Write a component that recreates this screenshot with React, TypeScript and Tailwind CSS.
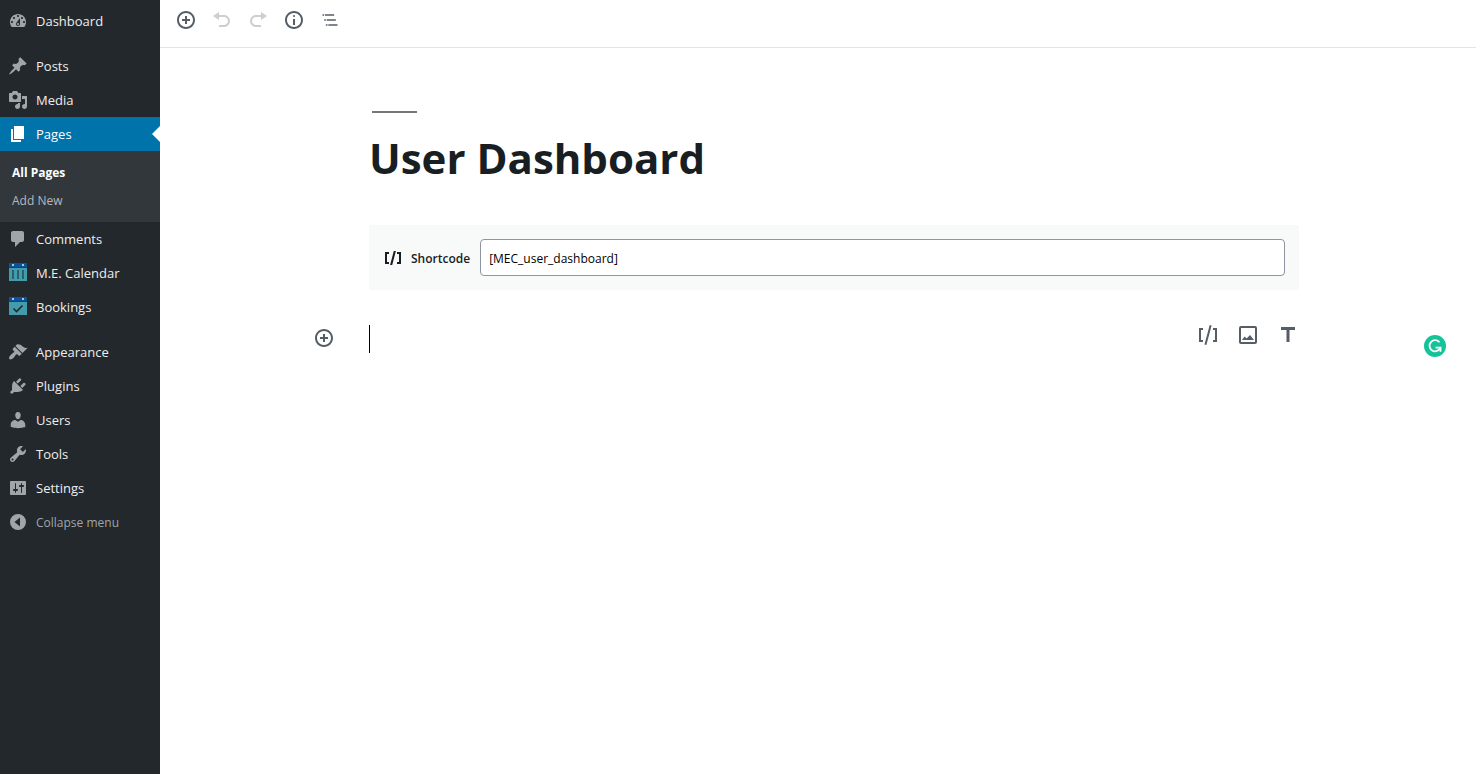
import { useState, type ReactNode } from "react";
import clsx from "clsx";

type MenuItem = {
    label: string;
    icon: ReactNode;
    gap?: boolean;
    children?: string[];
};

function Dashicon({ d, className = "size-5" }: { d: string; className?: string }) {
    return (
        <svg viewBox="0 0 20 20" className={className} fill="currentColor" aria-hidden="true">
            <path d={d} />
        </svg>
    );
}

function CalendarIcon({ check = false }: { check?: boolean }) {
    return (
        <svg viewBox="-1 0 20 20" className="size-5" aria-hidden="true">
            <path d="M0 0h18v4H0z" fill="#0a549b" />
            <path d="M0 4h18v1H0z" fill="#23404f" />
            <path d="M0 5h18v13H0z" fill="#429cab" />
            <path d="M3 1h2v2H3zM13 1h2v2h-2z" fill="#a9c3d8" />
            {check ? (
                <path d="M4.5 11.5l3 3 6-6" fill="none" stroke="#23282d" strokeWidth="1.6" />
            ) : (
                <path d="M3 7h2v9H3zM8 7h2v9H8zM13 7h2v9h-2z" fill="#28606e" />
            )}
        </svg>
    );
}

const icons = {
    dashboard: "M3.76 16h12.48c1.1-1.37 1.76-3.11 1.76-5 0-4.42-3.58-8-8-8s-8 3.58-8 8c0 1.89.66 3.63 1.76 5zM10 4c.55 0 1 .45 1 1s-.45 1-1 1-1-.45-1-1 .45-1 1-1zM6 6c.55 0 1 .45 1 1s-.45 1-1 1-1-.45-1-1 .45-1 1-1zm8 0c.55 0 1 .45 1 1s-.45 1-1 1-1-.45-1-1 .45-1 1-1zm-5.37 5.55L12 7v6c0 1.1-.9 2-2 2s-2-.9-2-2c0-.57.24-1.08.63-1.45zM4 10c.55 0 1 .45 1 1s-.45 1-1 1-1-.45-1-1 .45-1 1-1zm12 0c.55 0 1 .45 1 1s-.45 1-1 1-1-.45-1-1 .45-1 1-1zm-5 3c0-.55-.45-1-1-1s-1 .45-1 1 .45 1 1 1 1-.45 1-1z",
    post: "M10.44 3.02l1.82-1.82 6.36 6.35-1.83 1.82c-1.05-.68-2.48-.57-3.41.36l-.75.75c-.92.93-1.04 2.35-.35 3.41l-1.83 1.82-2.41-2.41-2.8 2.79c-.42.42-3.38 2.71-3.8 2.29s1.86-3.39 2.28-3.81l2.79-2.79L4.1 9.36l1.83-1.82c1.05.69 2.48.57 3.4-.36l.75-.75c.93-.92 1.05-2.35.36-3.41z",
    media: "M13 11V4c0-.55-.45-1-1-1h-1.67L9 1H5L3.67 3H2c-.55 0-1 .45-1 1v7c0 .55.45 1 1 1h10c.55 0 1-.45 1-1zM7 4.5c1.38 0 2.5 1.12 2.5 2.5S8.38 9.5 7 9.5 4.5 8.38 4.5 7 5.62 4.5 7 4.5zM14 6h5v10.5c0 1.38-1.12 2.5-2.5 2.5S14 17.88 14 16.5s1.12-2.5 2.5-2.5c.17 0 .34.02.5.05V9h-3V6zm-4 8.05V13h2v3.5c0 1.38-1.12 2.5-2.5 2.5S7 17.88 7 16.5 8.12 14 9.5 14c.17 0 .34.02.5.05z",
    page: "M6 15V2h10v13H6zm-1 1h8v2H3V5h2v11z",
    comments: "M5 2h9c1.1 0 2 .9 2 2v7c0 1.1-.9 2-2 2h-2l-5 5v-5H5c-1.1 0-2-.9-2-2V4c0-1.1.9-2 2-2z",
    appearance: "M14.48 11.06L7.41 3.99l1.5-1.5c.5-.56 2.3-.47 3.51.32 1.21.8 1.43 1.28 2.91 2.1 1.18.64 2.45 1.26 4.45.85zm-.71.71L6.7 4.7 4.93 6.47c-.39.39-.39 1.02 0 1.41l1.06 1.06c.39.39.39 1.03 0 1.42-.6.6-1.43 1.11-2.21 1.69-.35.26-.7.53-1.01.84C1.43 14.23.4 16.08 1.4 17.07c.99 1 2.84-.03 4.18-1.36.31-.31.58-.66.85-1.02.57-.78 1.08-1.61 1.69-2.21.39-.39 1.02-.39 1.41 0l1.06 1.06c.39.39 1.02.39 1.41 0z",
    plugins: "M13.11 4.36L9.87 7.6 8 5.73l3.24-3.24c.35-.34 1.05-.2 1.56.32.52.51.66 1.21.31 1.55zm-8 1.77l.91-1.12 9.01 9.01-1.19.84c-.71.71-2.63 1.16-3.82 1.16H6.14L4.9 17.26c-.59.59-1.54.59-2.12 0-.59-.58-.59-1.53 0-2.12l1.24-1.24v-3.88c0-1.13.4-3.19 1.09-3.89zm7.26 3.97l3.24-3.24c.34-.35 1.04-.21 1.55.31.52.51.66 1.21.31 1.55l-3.24 3.25z",
    users: "M10 9.25c-2.27 0-2.73-3.44-2.73-3.44C7 4.02 7.82 2 9.97 2c2.16 0 2.98 2.02 2.71 3.81 0 0-.41 3.44-2.68 3.44zm0 2.57L12.72 10c2.39 0 4.52 2.33 4.52 4.53v2.49s-3.65 1.13-7.24 1.13c-3.65 0-7.24-1.13-7.24-1.13v-2.49c0-2.25 1.94-4.48 4.47-4.48z",
    tools: "M16.68 9.77c-1.34 1.34-3.3 1.67-4.95.99l-5.41 6.52c-.99.99-2.59.99-3.58 0s-.99-2.59 0-3.57l6.52-5.42c-.68-1.65-.35-3.61.99-4.95 1.28-1.28 3.12-1.62 4.72-1.06l-2.89 2.89 2.82 2.82 2.86-2.87c.53 1.58.18 3.39-1.08 4.65zM3.81 16.21c.4.39 1.04.39 1.43 0 .4-.4.4-1.04 0-1.43-.39-.4-1.03-.4-1.43 0-.39.39-.39 1.03 0 1.43z",
    settings: "M18 16V4c0-.55-.45-1-1-1H3c-.55 0-1 .45-1 1v12c0 .55.45 1 1 1h14c.55 0 1-.45 1-1zM8 11h1c.55 0 1 .45 1 1s-.45 1-1 1H8v1.5c0 .28-.22.5-.5.5s-.5-.22-.5-.5V13H6c-.55 0-1-.45-1-1s.45-1 1-1h1V5.5c0-.28.22-.5.5-.5s.5.22.5.5V11zm5-2h-1c-.55 0-1-.45-1-1s.45-1 1-1h1V5.5c0-.28.22-.5.5-.5s.5.22.5.5V7h1c.55 0 1 .45 1 1s-.45 1-1 1h-1v5.5c0 .28-.22.5-.5.5s-.5-.22-.5-.5V9z",
    collapse: "M10 2a8 8 0 1 0 0 16 8 8 0 0 0 0-16zm2 12.5L6.5 10 12 5.5z",
    insert: "M10 1c-5 0-9 4-9 9s4 9 9 9 9-4 9-9-4-9-9-9zm0 16c-3.9 0-7-3.1-7-7s3.1-7 7-7 7 3.1 7 7-3.1 7-7 7zm1-11H9v3H6v2h3v3h2v-3h3V9h-3V6z",
    undo: "M12 5H7V2L1 6l6 4V7h5c2.2 0 4 1.8 4 4s-1.8 4-4 4H7v2h5c3.3 0 6-2.7 6-6s-2.7-6-6-6z",
    redo: "M8 5h5V2l6 4-6 4V7H8c-2.2 0-4 1.8-4 4s1.8 4 4 4h5v2H8c-3.3 0-6-2.7-6-6s2.7-6 6-6z",
    info: "M9 15h2V9H9v6zm1-10c-.5 0-1 .5-1 1s.5 1 1 1 1-.5 1-1-.5-1-1-1zm0-4c-5 0-9 4-9 9s4 9 9 9 9-4 9-9-4-9-9-9zm0 16c-3.9 0-7-3.1-7-7s3.1-7 7-7 7 3.1 7 7-3.1 7-7 7z",
    shortcode: "M6 14H4V6h2V4H2v12h4M7.1 17h2.1l3.7-14h-2.1M14 4v2h2v8h-2v2h4V4",
};

const menu: MenuItem[] = [
    { label: "Dashboard", icon: <Dashicon d={icons.dashboard} /> },
    { label: "Posts", icon: <Dashicon d={icons.post} />, gap: true },
    { label: "Media", icon: <Dashicon d={icons.media} /> },
    { label: "Pages", icon: <Dashicon d={icons.page} />, children: ["All Pages", "Add New"] },
    { label: "Comments", icon: <Dashicon d={icons.comments} /> },
    { label: "M.E. Calendar", icon: <CalendarIcon /> },
    { label: "Bookings", icon: <CalendarIcon check /> },
    { label: "Appearance", icon: <Dashicon d={icons.appearance} />, gap: true },
    { label: "Plugins", icon: <Dashicon d={icons.plugins} /> },
    { label: "Users", icon: <Dashicon d={icons.users} /> },
    { label: "Tools", icon: <Dashicon d={icons.tools} /> },
    { label: "Settings", icon: <Dashicon d={icons.settings} /> },
];

function Sidebar() {
    return (
        <nav className="w-40 shrink-0 bg-[#23282d] pt-1 text-[13px]">
            <ul>
                {menu.map((item) => {
                    const active = !!item.children;
                    return (
                        <li key={item.label} className={clsx(item.gap && "mt-[11px]")}>
                            <a
                                href="#"
                                className={clsx(
                                    "relative flex h-[34px] items-center",
                                    active ? "bg-[#0073aa] text-white" : "text-[#eeeeee]"
                                )}
                            >
                                <span
                                    className={clsx(
                                        "flex w-9 shrink-0 justify-center",
                                        active ? "text-white" : "text-[#a0a5aa]"
                                    )}
                                >
                                    {item.icon}
                                </span>
                                <span className="pt-0.5">{item.label}</span>
                                {active && (
                                    <span className="absolute right-0 top-[9px] border-8 border-l-0 border-transparent border-r-white" />
                                )}
                            </a>
                            {item.children && (
                                <ul className="bg-[#32373c] pt-2 pb-[7px] text-[12px]">
                                    {item.children.map((child, i) => (
                                        <li key={child}>
                                            <a
                                                href="#"
                                                className={clsx(
                                                    "flex h-7 items-center px-3",
                                                    i === 0 ? "font-bold text-white" : "text-[#b4b9be]"
                                                )}
                                            >
                                                {child}
                                            </a>
                                        </li>
                                    ))}
                                </ul>
                            )}
                        </li>
                    );
                })}
            </ul>
            <button className="flex h-[34px] w-full items-center text-[12px] text-[#a0a5aa]">
                <span className="flex w-9 shrink-0 justify-center">
                    <Dashicon d={icons.collapse} />
                </span>
                <span className="pt-0.5">Collapse menu</span>
            </button>
        </nav>
    );
}

function Toolbar() {
    return (
        <header className="flex h-12 items-start gap-4 border-b border-[#e2e4e7] px-4 pt-[10px] text-[#555d66]">
            <button aria-label="Add block">
                <Dashicon d={icons.insert} />
            </button>
            <button aria-label="Undo" disabled className="text-[#ccced1]">
                <Dashicon d={icons.undo} />
            </button>
            <button aria-label="Redo" disabled className="text-[#ccced1]">
                <Dashicon d={icons.redo} />
            </button>
            <button aria-label="Content structure">
                <Dashicon d={icons.info} />
            </button>
            <button aria-label="Block navigation">
                <svg viewBox="0 0 24 24" className="size-5" fill="currentColor">
                    <path d="M5 5H3v2h2V5zm3 8h11v-2H8v2zm9-8H6v2h11V5zM7 11H5v2h2v-2zm0 8h2v-2H7v2zm3-2v2h11v-2H10z" />
                </svg>
            </button>
        </header>
    );
}

function ShortcodeBlock() {
    const [code, setCode] = useState("[MEC_user_dashboard]");

    return (
        <div className="flex items-center bg-[#f8f9f9] p-[14px] text-[12px]">
            <label htmlFor="shortcode" className="flex shrink-0 items-center gap-2 pr-[10px] font-semibold text-[#191e23]">
                <Dashicon d={icons.shortcode} />
                <span className="pt-0.5">Shortcode</span>
            </label>
            <input
                id="shortcode"
                type="text"
                value={code}
                onChange={(e) => setCode(e.target.value)}
                className="h-[37px] min-w-0 flex-1 rounded border border-[#8d96a0] bg-white px-2 pt-0.5 text-black"
            />
        </div>
    );
}

// Empty paragraph: inserter on the left, quick block types on the right
function EmptyBlock() {
    return (
        <div className="flex h-10 items-center text-[#555d66]">
            <div className="flex w-[209px] justify-end pr-[35px]">
                <button aria-label="Add block">
                    <Dashicon d={icons.insert} />
                </button>
            </div>
            <div className="flex flex-1 items-start">
                <span className="mt-0.5 h-7 w-px bg-black" />
                <input aria-label="Empty block" className="h-7 min-w-0 flex-1 outline-none" />
                <div className="-mr-px flex gap-4">
                    <button aria-label="Shortcode">
                        <svg viewBox="0 0 24 24" className="size-6" fill="currentColor">
                            <path d="M8.5 21.4l1.9.5 5.2-19.3-1.9-.5zM3 19h4v-2H5V7h2V5H3zM17 5v2h2v10h-2v2h4V5z" />
                        </svg>
                    </button>
                    <button aria-label="Image">
                        <svg viewBox="0 0 24 24" className="size-6" fill="currentColor">
                            <path d="M19 3H5a2 2 0 0 0-2 2v14c0 1.1.9 2 2 2h14a2 2 0 0 0 2-2V5a2 2 0 0 0-2-2zm0 16H5V5h14v14z" />
                            <path d="M6 17l2.6-3.4 2 2L14 12l4 5z" />
                        </svg>
                    </button>
                    <button aria-label="Heading">
                        <svg viewBox="0 0 24 24" className="size-6" fill="currentColor">
                            <path d="M5 4v3h5.5v12h3V7H19V4z" />
                        </svg>
                    </button>
                </div>
            </div>
            <div className="flex w-[177px] justify-end pt-4 pr-[30px]">
                <button aria-label="Grammarly" className="rounded-full bg-[#15c39a]">
                    <svg viewBox="0 0 22 22" className="size-[22px]" fill="none" stroke="white" strokeWidth="1.8">
                        <path d="M15.5 7.2A5.6 5.6 0 1 0 16 13.5" />
                        <path d="M11.5 12.7h5v4" />
                    </svg>
                </button>
            </div>
        </div>
    );
}

export default function App() {
    return (
        <div className="flex min-h-screen bg-white font-['Open_Sans','Noto_Sans',sans-serif]">
            <Sidebar />
            <main className="min-w-0 flex-1">
                <Toolbar />
                <div className="pt-[63px] pr-[177px] pl-[209px]">
                    <div className="ml-[3px] h-[2px] w-[45px] bg-[#767676]" />
                    <h1 className="mt-[14px] mb-9 text-[42px] leading-[62px] font-bold text-[#191e23]">User Dashboard</h1>
                    <ShortcodeBlock />
                </div>
                <div className="pt-[28px]">
                    <EmptyBlock />
                </div>
            </main>
        </div>
    );
}
